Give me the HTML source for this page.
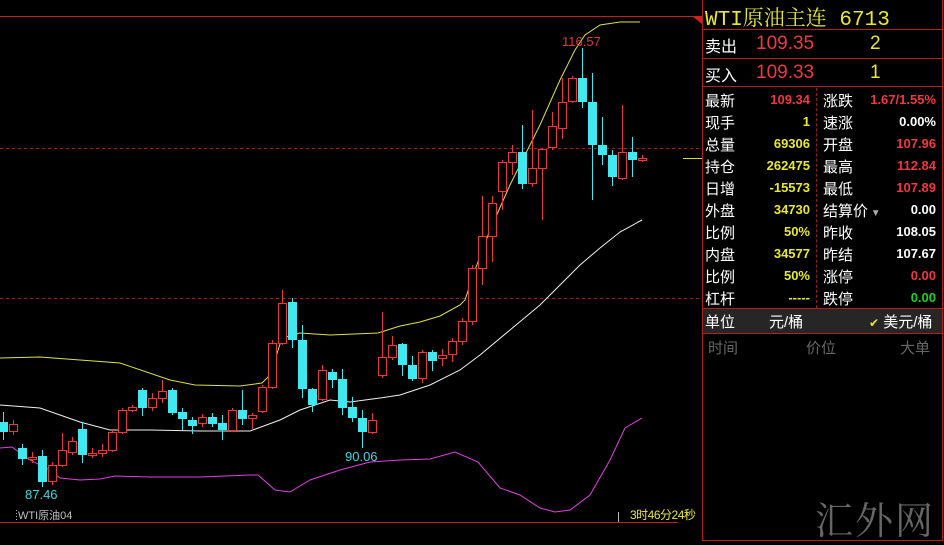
<!DOCTYPE html>
<html><head><meta charset="utf-8"><style>
*{margin:0;padding:0;box-sizing:border-box}
body{width:944px;height:542px;background:#000;overflow:hidden;position:relative;font-family:"Liberation Sans","Noto Sans CJK SC",sans-serif}
svg{position:absolute;left:0;top:0}
.p{position:absolute;left:702px;top:0;width:241px;height:541px;border-left:1px solid #b02020;border-right:1px solid #b02020;border-bottom:1px solid #b02020}
.t{position:absolute;left:2px;top:2px;font-family:"Liberation Mono","Noto Serif CJK SC",serif;color:#e8e830;font-size:21px;white-space:nowrap}
.hl{position:absolute;left:0;width:239px;height:1px;background:#b02020}
.r{position:absolute;font-size:16px;color:#fff;white-space:nowrap}
.row{position:absolute;left:0;width:239px;height:22px;font-size:15px}
.row span{position:absolute;top:2px}
.l1{left:2px;color:#fff}.v1{right:132px;font-weight:bold;font-size:13px;top:4px!important}
.l2{left:120px;color:#fff}.v2{right:6px;font-weight:bold;font-size:13px;top:4px!important}
.y{color:#e8e830}.rd{color:#f03840}.w{color:#fff}.g{color:#20d020}
</style></head><body>
<svg width="702" height="542" viewBox="0 0 702 542">
<line x1="0" y1="16.5" x2="702" y2="16.5" stroke="#c02020"/>
<polygon points="692,16 702,16 702,24" fill="#d02020"/>
<line x1="0" y1="148.5" x2="702" y2="148.5" stroke="#a02020" stroke-dasharray="3,3"/>
<line x1="0" y1="298.5" x2="702" y2="298.5" stroke="#a02020" stroke-dasharray="3,3"/>
<line x1="0" y1="522.5" x2="678" y2="522.5" stroke="#c02020"/>
<line x1="683" y1="158.5" x2="702" y2="158.5" stroke="#d8d830"/>
<polyline fill="none" stroke="#e0e040" stroke-width="1" points="0,358 40,357 120,363 170,380 195,385 240,386 262,383 270,375 282,338 300,333 330,335 378,333 400,326 420,322 440,316 460,305 465,300 475,270 490,230 510,185 540,125 560,80 575,50 585,35 600,25 620,22 640,22"/>
<polyline fill="none" stroke="#f0f0f0" stroke-width="1" points="0,405 40,408 80,422 110,430 150,430 200,431 250,431 280,420 300,410 330,400 350,402 380,398 400,395 430,385 460,370 480,355 510,330 540,305 560,285 580,265 600,248 620,232 642,220"/>
<polyline fill="none" stroke="#e040e0" stroke-width="1" points="0,448 12,447 30,460 50,470 60,478 80,480 100,479 115,476 150,477 200,477 250,475 258,475 275,490 290,492 310,480 340,470 370,462 400,460 430,459 455,452 478,462 500,488 520,495 540,508 555,512 570,510 590,495 610,460 625,428 642,418"/>
<g id="c" stroke-width="1"></g>
<text x="25" y="499" fill="#40d8e0" font-size="13">87.46</text>
<text x="345" y="461" fill="#40d8e0" font-size="13">90.06</text>
<text x="562" y="46" fill="#e03838" font-size="13">116.57</text>
<text x="18" y="519" fill="#c0c0c0" font-size="11">WTI原油04</text>
<line x1="16.5" y1="510" x2="16.5" y2="522" stroke="#bbb" stroke-dasharray="1,2"/>
<line x1="618.5" y1="512" x2="618.5" y2="522" stroke="#bbb"/>
<text x="630" y="519" fill="#e8e830" font-size="12" letter-spacing="-0.5">3时46分24秒</text>
</svg>
<div class="p">
<div class="t">WTI原油主连 6713</div>
<div class="hl" style="top:29px"></div>
<div class="r" style="left:2px;top:33px">卖出</div><div class="r rd" style="left:53px;top:33px;font-size:19px">109.35</div><div class="r y" style="left:167px;top:33px;font-size:19px">2</div>
<div class="hl" style="top:58px"></div>
<div class="r" style="left:2px;top:62px">买入</div><div class="r rd" style="left:53px;top:62px;font-size:19px">109.33</div><div class="r y" style="left:167px;top:62px;font-size:19px">1</div>
<div class="hl" style="top:86px"></div>
<div style="position:absolute;left:113px;top:88px;height:220px;border-left:1px dashed #902020"></div>
<div class="row" style="top:88px"><span class="l1">最新</span><span class="v1 rd">109.34</span><span class="l2">涨跌</span><span class="v2 rd">1.67/1.55%</span></div>
<div class="row" style="top:110px"><span class="l1">现手</span><span class="v1 y">1</span><span class="l2">速涨</span><span class="v2 w">0.00%</span></div>
<div class="row" style="top:132px"><span class="l1">总量</span><span class="v1 y">69306</span><span class="l2">开盘</span><span class="v2 rd">107.96</span></div>
<div class="row" style="top:154px"><span class="l1">持仓</span><span class="v1 y">262475</span><span class="l2">最高</span><span class="v2 rd">112.84</span></div>
<div class="row" style="top:176px"><span class="l1">日增</span><span class="v1 y">-15573</span><span class="l2">最低</span><span class="v2 rd">107.89</span></div>
<div class="row" style="top:198px"><span class="l1">外盘</span><span class="v1 y">34730</span><span class="l2">结算价<small style="color:#aaa;font-size:10px"> ▼</small></span><span class="v2 w">0.00</span></div>
<div class="row" style="top:220px"><span class="l1">比例</span><span class="v1 y">50%</span><span class="l2">昨收</span><span class="v2 w">108.05</span></div>
<div class="row" style="top:242px"><span class="l1">内盘</span><span class="v1 y">34577</span><span class="l2">昨结</span><span class="v2 w">107.67</span></div>
<div class="row" style="top:264px"><span class="l1">比例</span><span class="v1 y">50%</span><span class="l2">涨停</span><span class="v2 rd">0.00</span></div>
<div class="row" style="top:286px"><span class="l1">杠杆</span><span class="v1 y">-----</span><span class="l2">跌停</span><span class="v2 g">0.00</span></div>
<div class="hl" style="top:308px"></div>
<div style="position:absolute;left:0;top:309px;width:239px;height:24px;background:#262626"></div>
<div class="r" style="left:2px;top:311px;font-size:15px">单位</div>
<div class="r" style="left:66px;top:311px;font-size:15px">元/桶</div>
<div class="r" style="left:166px;top:311px;font-size:15px"><span style="color:#e8e830;font-size:12px">✔</span> 美元/桶</div>
<div class="hl" style="top:333px"></div>
<div class="r" style="left:5px;top:337px;font-size:15px;color:#666">时间</div>
<div class="r" style="left:103px;top:337px;font-size:15px;color:#666">价位</div>
<div class="r" style="left:197px;top:337px;font-size:15px;color:#666">大单</div>
<div class="r" style="left:112px;top:490px;font-size:38px;color:#666;font-family:'Noto Serif CJK SC',serif;letter-spacing:2px">汇外网</div>
</div>
<script>
var d=[[3,422,432,0,412,440],[13,424,431,1,420,435],[22,448,459,0,444,465],[32,457,459,1,452,463],[42,456,482,0,450,487],[52,465,481,1,462,485],[62,450,465,1,433,467],[72,441,452,1,437,455],[82,429,455,0,422,463],[92,453,455,1,448,458],[102,450,453,1,444,457],[112,432,450,1,430,452],[122,410,432,1,408,434],[132,407,410,1,405,412],[142,390,408,0,388,416],[152,398,407,1,393,411],[162,391,398,1,380,403],[172,390,413,0,388,415],[182,412,419,0,408,430],[192,420,426,0,417,434],[202,417,423,1,414,427],[212,417,424,0,413,427],[222,423,430,0,415,440],[232,410,430,1,408,432],[242,410,419,0,390,425],[252,415,418,1,413,429],[262,387,411,1,385,413],[272,343,387,1,340,389],[282,303,343,1,290,345],[292,302,340,0,298,348],[302,340,389,0,325,398],[312,389,405,0,388,412],[322,370,399,1,365,401],[332,372,380,0,369,388],[342,379,408,0,369,415],[352,407,418,0,397,422],[362,418,432,0,410,448],[372,420,432,1,413,434],[382,357,375,1,312,378],[392,345,357,1,336,360],[402,344,365,0,343,376],[412,365,379,0,356,381],[422,352,378,1,350,383],[432,352,361,0,350,371],[442,355,358,1,349,366],[452,341,354,1,338,362],[462,321,341,1,318,345],[472,268,321,1,265,325],[482,236,268,1,196,285],[492,203,236,1,196,262],[502,162,191,1,160,210],[512,152,162,1,145,175],[522,152,184,0,125,189],[532,168,183,1,110,187],[542,149,168,1,148,220],[552,126,147,1,112,150],[562,102,128,1,78,139],[572,78,101,1,76,103],[582,78,102,0,48,108],[592,102,145,0,73,200],[602,145,155,0,117,165],[612,155,177,0,150,186],[622,152,178,1,105,180],[632,152,160,0,137,177],[642,158,160,1,155,162]];
var g=document.getElementById('c'),s='';
d.forEach(function(c){var x=c[0],col=c[3]?'#e83838':'#40e8f0';
s+='<line x1="'+(x+.5)+'" y1="'+c[4]+'" x2="'+(x+.5)+'" y2="'+c[5]+'" stroke="'+col+'"/>';
if(c[3]){s+='<rect x="'+(x-3.5)+'" y="'+(c[1]+.5)+'" width="8" height="'+Math.max(1,c[2]-c[1])+'" fill="#000" stroke="'+col+'"/>';}
else{s+='<rect x="'+(x-4)+'" y="'+c[1]+'" width="9" height="'+Math.max(2,c[2]-c[1])+'" fill="'+col+'"/>';}});
g.innerHTML=s;
</script>
</body></html>
